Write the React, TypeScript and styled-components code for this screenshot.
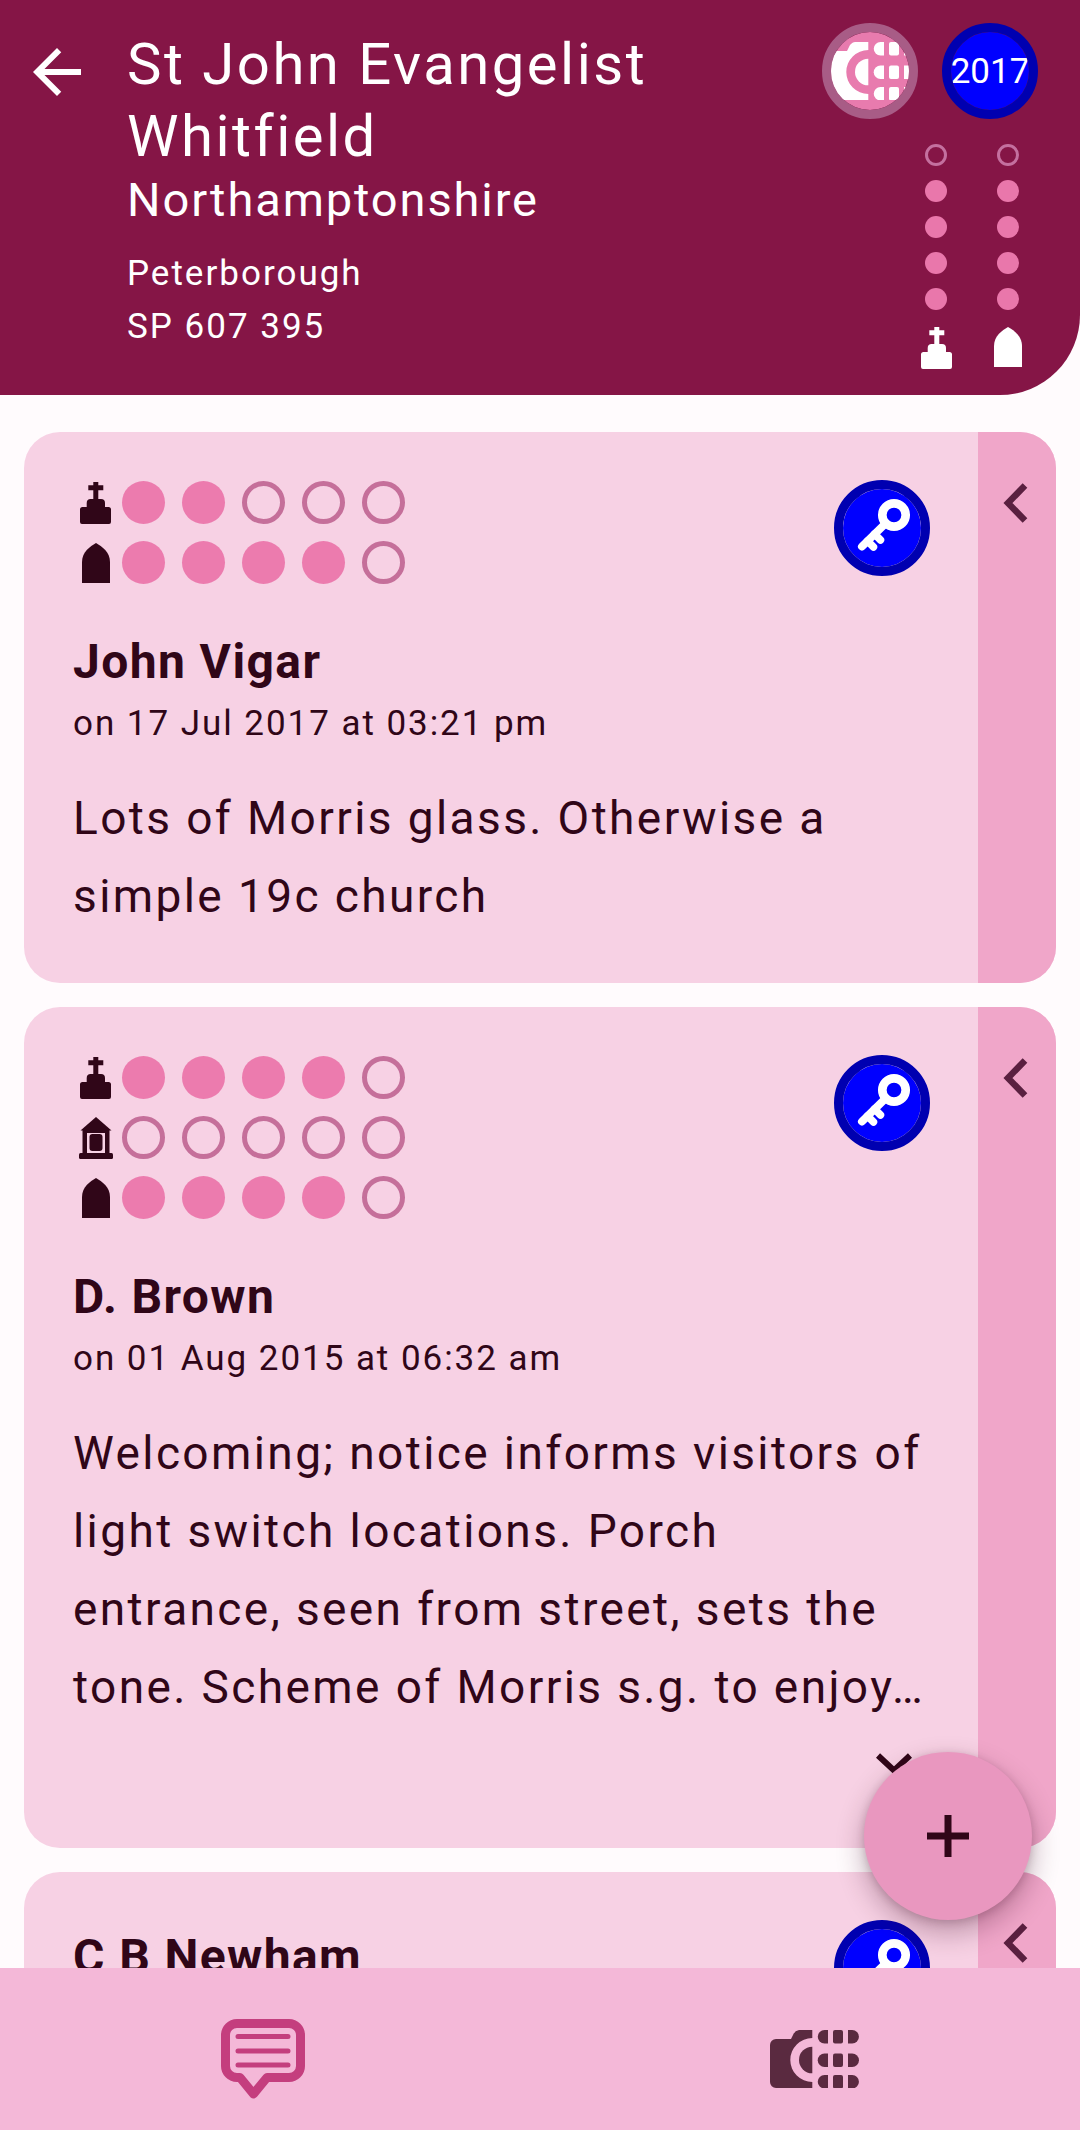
import * as React from "react";
import styled, { createGlobalStyle } from "styled-components";

const GlobalStyle = createGlobalStyle`
  html, body {
    margin: 0;
    padding: 0;
    background: #fffbfd;
    font-family: Roboto, "Noto Sans", sans-serif;
  }
`;

const Page = styled.div`
  position: relative;
  width: 1080px;
  height: 2130px;
  display: flex;
  flex-direction: column;
  overflow: hidden;
  color: #300618;
`;

const Header = styled.header`
  flex: none;
  height: 395px;
  box-sizing: border-box;
  display: flex;
  background: #851546;
  color: #fff;
  border-bottom-right-radius: 80px;
`;

const BackButton = styled.button`
  flex: none;
  width: 72px;
  height: 72px;
  margin: 36px 0 0 21px;
  padding: 0;
  border: 0;
  background: none;
  color: #fff;
  svg {
    display: block;
  }
`;

const ChurchInfo = styled.div`
  flex: 1;
  min-width: 0;
  padding: 28px 0 0 34px;
`;

const Title = styled.h1`
  margin: 0;
  max-width: 640px;
  font-size: 58px;
  line-height: 72px;
  font-weight: 400;
  letter-spacing: 2.5px;
`;

const County = styled.div`
  margin-bottom: 19px;
  font-size: 47px;
  line-height: 56px;
  letter-spacing: 1.9px;
`;

const Detail = styled.div`
  font-size: 35px;
  line-height: 53px;
  letter-spacing: 2px;
`;

const HeaderSide = styled.div`
  flex: none;
  width: 216px;
  padding: 23px 42px 0 0;
  display: flex;
  flex-direction: column;
  align-items: flex-end;
`;

const BadgeRow = styled.div`
  display: flex;
  gap: 24px;
`;

const Badge = styled.div<{ $ring: string; $fill: string }>`
  width: 96px;
  height: 96px;
  box-sizing: border-box;
  border-radius: 50%;
  border: 9px solid ${(p) => p.$ring};
  background: ${(p) => p.$fill};
  background-clip: padding-box;
  overflow: hidden;
  display: flex;
  align-items: center;
  justify-content: center;
  color: #fff;
  font-size: 35px;
  flex: none;
  svg {
    flex: none;
  }
`;

const KeyBadge = styled(Badge)`
  position: absolute;
  top: 48px;
  right: 48px;
`;

const ScoreColumns = styled.div`
  display: flex;
  gap: 28px;
  margin: 25px 8px 0 0;
`;

const ScoreColumn = styled.div`
  width: 44px;
  display: flex;
  flex-direction: column;
  align-items: center;
  gap: 14px;
  svg {
    display: block;
    margin-top: 3px;
  }
`;

const SmallDot = styled.span<{ $on: boolean }>`
  width: 22px;
  height: 22px;
  box-sizing: border-box;
  border-radius: 50%;
  background: ${(p) => (p.$on ? "#e977ab" : "transparent")};
  border: ${(p) => (p.$on ? "0" : "3px solid #c4709f")};
`;

const List = styled.main`
  flex: 1;
  min-height: 0;
  overflow: hidden;
  padding: 37px 24px 0;
  display: flex;
  flex-direction: column;
  gap: 24px;
`;

const Card = styled.article`
  flex: none;
  display: flex;
  border-radius: 36px;
  overflow: hidden;
  background: #f7d1e4;
`;

const CardBody = styled.div`
  position: relative;
  flex: 1;
  min-width: 0;
  box-sizing: border-box;
  padding: 49px 49px 48px;
`;

const CardStrip = styled.div`
  flex: none;
  width: 78px;
  background: #f0a6c9;
  svg {
    display: block;
    margin: 51px 0 0 25px;
  }
`;

const Scores = styled.div`
  display: flex;
  flex-direction: column;
  gap: 17px;
  margin-bottom: 47px;
`;

const ScoreRow = styled.div`
  display: flex;
  align-items: center;
  height: 43px;
`;

const ScoreIcon = styled.span`
  flex: none;
  width: 49px;
  height: 43px;
  display: flex;
  align-items: center;
  justify-content: center;
  padding-right: 4px;
  box-sizing: border-box;
`;

const ScoreDots = styled.span`
  display: flex;
  gap: 17px;
`;

const Dot = styled.span<{ $on: boolean }>`
  width: 43px;
  height: 43px;
  box-sizing: border-box;
  border-radius: 50%;
  background: ${(p) => (p.$on ? "#ec7bae" : "transparent")};
  border: ${(p) => (p.$on ? "0" : "5px solid #c56f9a")};
`;

const Author = styled.div`
  margin-top: 5px;
  font-size: 48px;
  line-height: 62px;
  font-weight: 700;
  letter-spacing: 1.4px;
`;

const DateLine = styled.div`
  margin-top: 8px;
  font-size: 35px;
  line-height: 46px;
  letter-spacing: 1.95px;
`;

const Comment = styled.p`
  margin: 32px 0 0;
  font-size: 46px;
  line-height: 78px;
  letter-spacing: 2.4px;
`;

const ExpandRow = styled.div`
  height: 72px;
  margin-bottom: 2px;
  padding-right: 17px;
  display: flex;
  justify-content: flex-end;
  svg {
    display: block;
    margin-top: 27px;
  }
`;

const BottomNav = styled.nav`
  position: relative;
  flex: none;
  height: 162px;
  box-sizing: border-box;
  padding-top: 19px;
  display: flex;
  align-items: center;
  justify-content: center;
  gap: 465px;
  background: #f4b8d8;
`;

const Fab = styled.button`
  position: absolute;
  left: 864px;
  top: 1752px;
  width: 168px;
  height: 168px;
  padding: 0;
  border: 0;
  border-radius: 50%;
  background: #e997bf;
  display: flex;
  align-items: center;
  justify-content: center;
  box-shadow: 0 12px 28px rgba(60, 10, 35, 0.32), 0 2px 8px rgba(60, 10, 35, 0.18);
`;

function ArrowBack() {
  return (
    <svg width="72" height="72" viewBox="0 0 24 24" fill="currentColor">
      <path d="M20 11H7.83l5.59-5.59L12 4l-8 8 8 8 1.41-1.41L7.83 13H20v-2z" />
    </svg>
  );
}

function GraveIcon({ color }: { color: string }) {
  return (
    <svg width="31" height="42" viewBox="0 0 31 42" fill={color}>
      <path d="M13.3 0h5v3.3h5v5h-5V17H21a4 4 0 0 1 4 4v4h3.5a2.5 2.5 0 0 1 2.5 2.5V40a2 2 0 0 1-2 2H2a2 2 0 0 1-2-2V27.5A2.5 2.5 0 0 1 2.5 25H6.7v-4a4 4 0 0 1 4-4h2.6V8.3h-5v-5h5z" />
    </svg>
  );
}

function ArchIcon({ color }: { color: string }) {
  return (
    <svg width="28" height="40" viewBox="0 0 28 40" fill={color}>
      <path d="M14 0C20 3.5 28 9 28 19v21H0V19C0 9 8 3.5 14 0z" />
    </svg>
  );
}

function ChapelIcon({ color }: { color: string }) {
  return (
    <svg width="34" height="42" viewBox="0 0 34 42" fill={color}>
      <path d="M17 0l15.500 13.500H1.500z" />
      <path fillRule="evenodd" d="M3.500 13h27v24h-27zM8 16v21h18V16z" />
      <rect x="10.500" y="17" width="13" height="17" rx="3" />
      <rect x="0" y="36" width="34" height="6" rx="1.500" />
    </svg>
  );
}

function KeyIcon() {
  return (
    <svg width="78" height="78" viewBox="0 0 78 78" fill="none" stroke="#fff" strokeLinecap="round">
      <circle cx="51" cy="26" r="11.700" strokeWidth="8.700" />
      <path d="M43 34L19 57.500" strokeWidth="8" />
      <path d="M31.500 45l6 6M24.500 52l6 6" strokeWidth="7.500" />
    </svg>
  );
}

function RingsCamera({ color }: { color: string }) {
  return (
    <svg width="89" height="58" viewBox="0 0 89 58" fill={color}>
      <path
        fillRule="evenodd"
        d="M29 0h13.300v8A22 22 0 0 0 42.300 52v6H6a6 6 0 0 1-6-6V15a6 6 0 0 1 6-6h15l2-4a8 8 0 0 1 6-5z"
      />
      <path d="M42.300 16.700a13.300 13.300 0 0 0 0 26.600z" />
      {[0, 23.500, 45].map((y) => (
        <g key={y}>
          <path d={`M54.500 ${y}h3.500v13.500h-3.500a6.750 6.750 0 0 1 0-13.500z`} />
          <rect x="63" y={y} width="10" height="13.500" rx="2" />
          <path d={`M78 ${y}h4.200a6.750 6.750 0 0 1 0 13.500H78z`} />
        </g>
      ))}
    </svg>
  );
}

function ChatIcon() {
  return (
    <svg width="84" height="80" viewBox="0 0 84 80" fill="none" stroke="#c43e7e" strokeLinecap="round" strokeLinejoin="round">
      <path
        d="M16 4.500h52A11.500 11.500 0 0 1 79.500 16v31A11.500 11.500 0 0 1 68 58.500H46L32.500 75 19 58.500h-3A11.500 11.500 0 0 1 4.500 47V16A11.500 11.500 0 0 1 16 4.500z"
        strokeWidth="9"
      />
      <path d="M17 17.500h50M17 32h50M17 46h50" strokeWidth="5" />
    </svg>
  );
}

function ChevronLeft() {
  return (
    <svg width="26" height="40" viewBox="0 0 26 40" fill="none" stroke="#5a2040" strokeWidth="6.500">
      <path d="M22 2.500L5 20l17 17.500" />
    </svg>
  );
}

function ChevronDown() {
  return (
    <svg width="36" height="22" viewBox="0 0 36 22" fill="none" stroke="#300618" strokeWidth="6">
      <path d="M2 2.500l16 15 16-15" />
    </svg>
  );
}

type ScoreKind = "grave" | "chapel" | "arch";

type Review = {
  author: string;
  date?: string;
  text?: string;
  scores: { kind: ScoreKind; value: number }[];
  expandable?: boolean;
};

const reviews: Review[] = [
  {
    author: "John Vigar",
    date: "on 17 Jul 2017 at 03:21 pm",
    text: "Lots of Morris glass. Otherwise a simple 19c church",
    scores: [
      { kind: "grave", value: 2 },
      { kind: "arch", value: 4 },
    ],
  },
  {
    author: "D. Brown",
    date: "on 01 Aug 2015 at 06:32 am",
    text: "Welcoming; notice informs visitors of light switch locations. Porch entrance, seen from street, sets the tone. Scheme of Morris s.g. to enjoy…",
    scores: [
      { kind: "grave", value: 4 },
      { kind: "chapel", value: 0 },
      { kind: "arch", value: 4 },
    ],
    expandable: true,
  },
  {
    author: "C B Newham",
    scores: [],
  },
];

function scoreIcon(kind: ScoreKind) {
  const color = "#300618";
  if (kind === "grave") return <GraveIcon color={color} />;
  if (kind === "chapel") return <ChapelIcon color={color} />;
  return <ArchIcon color={color} />;
}

function HeaderScore({ icon }: { icon: React.ReactNode }) {
  return (
    <ScoreColumn>
      {[false, true, true, true, true].map((on, idx) => (
        <SmallDot key={idx} $on={on} />
      ))}
      {icon}
    </ScoreColumn>
  );
}

export default function App() {
  return (
    <Page>
      <GlobalStyle />
      <Header>
        <BackButton aria-label="Back">
          <ArrowBack />
        </BackButton>
        <ChurchInfo>
          <Title>St John Evangelist Whitfield</Title>
          <County>Northamptonshire</County>
          <Detail>Peterborough</Detail>
          <Detail>SP 607 395</Detail>
        </ChurchInfo>
        <HeaderSide>
          <BadgeRow>
            <Badge $ring="#a85c86" $fill="#e87bae">
              <RingsCamera color="#fff" />
            </Badge>
            <Badge $ring="#0000b0" $fill="#0000ff">2017</Badge>
          </BadgeRow>
          <ScoreColumns>
            <HeaderScore icon={<GraveIcon color="#fff" />} />
            <HeaderScore icon={<ArchIcon color="#fff" />} />
          </ScoreColumns>
        </HeaderSide>
      </Header>
      <List>
        {reviews.map((review) => (
          <Card key={review.author}>
            <CardBody>
              <KeyBadge $ring="#0000b0" $fill="#0000ff">
                <KeyIcon />
              </KeyBadge>
              {review.scores.length > 0 && (
                <Scores>
                  {review.scores.map((score) => (
                    <ScoreRow key={score.kind}>
                      <ScoreIcon>{scoreIcon(score.kind)}</ScoreIcon>
                      <ScoreDots>
                        {[0, 1, 2, 3, 4].map((idx) => (
                          <Dot key={idx} $on={idx < score.value} />
                        ))}
                      </ScoreDots>
                    </ScoreRow>
                  ))}
                </Scores>
              )}
              <Author>{review.author}</Author>
              {review.date && <DateLine>{review.date}</DateLine>}
              {review.text && <Comment>{review.text}</Comment>}
              {review.expandable && (
                <ExpandRow>
                  <ChevronDown />
                </ExpandRow>
              )}
            </CardBody>
            <CardStrip>
              <ChevronLeft />
            </CardStrip>
          </Card>
        ))}
      </List>
      <BottomNav>
        <ChatIcon />
        <RingsCamera color="#5a2a40" />
      </BottomNav>
      <Fab aria-label="Add">
        <svg width="42" height="42" viewBox="0 0 42 42" fill="#300618">
          <path d="M17.500 0h7v17.500H42v7H24.500V42h-7V24.500H0v-7h17.500z" />
        </svg>
      </Fab>
    </Page>
  );
}
